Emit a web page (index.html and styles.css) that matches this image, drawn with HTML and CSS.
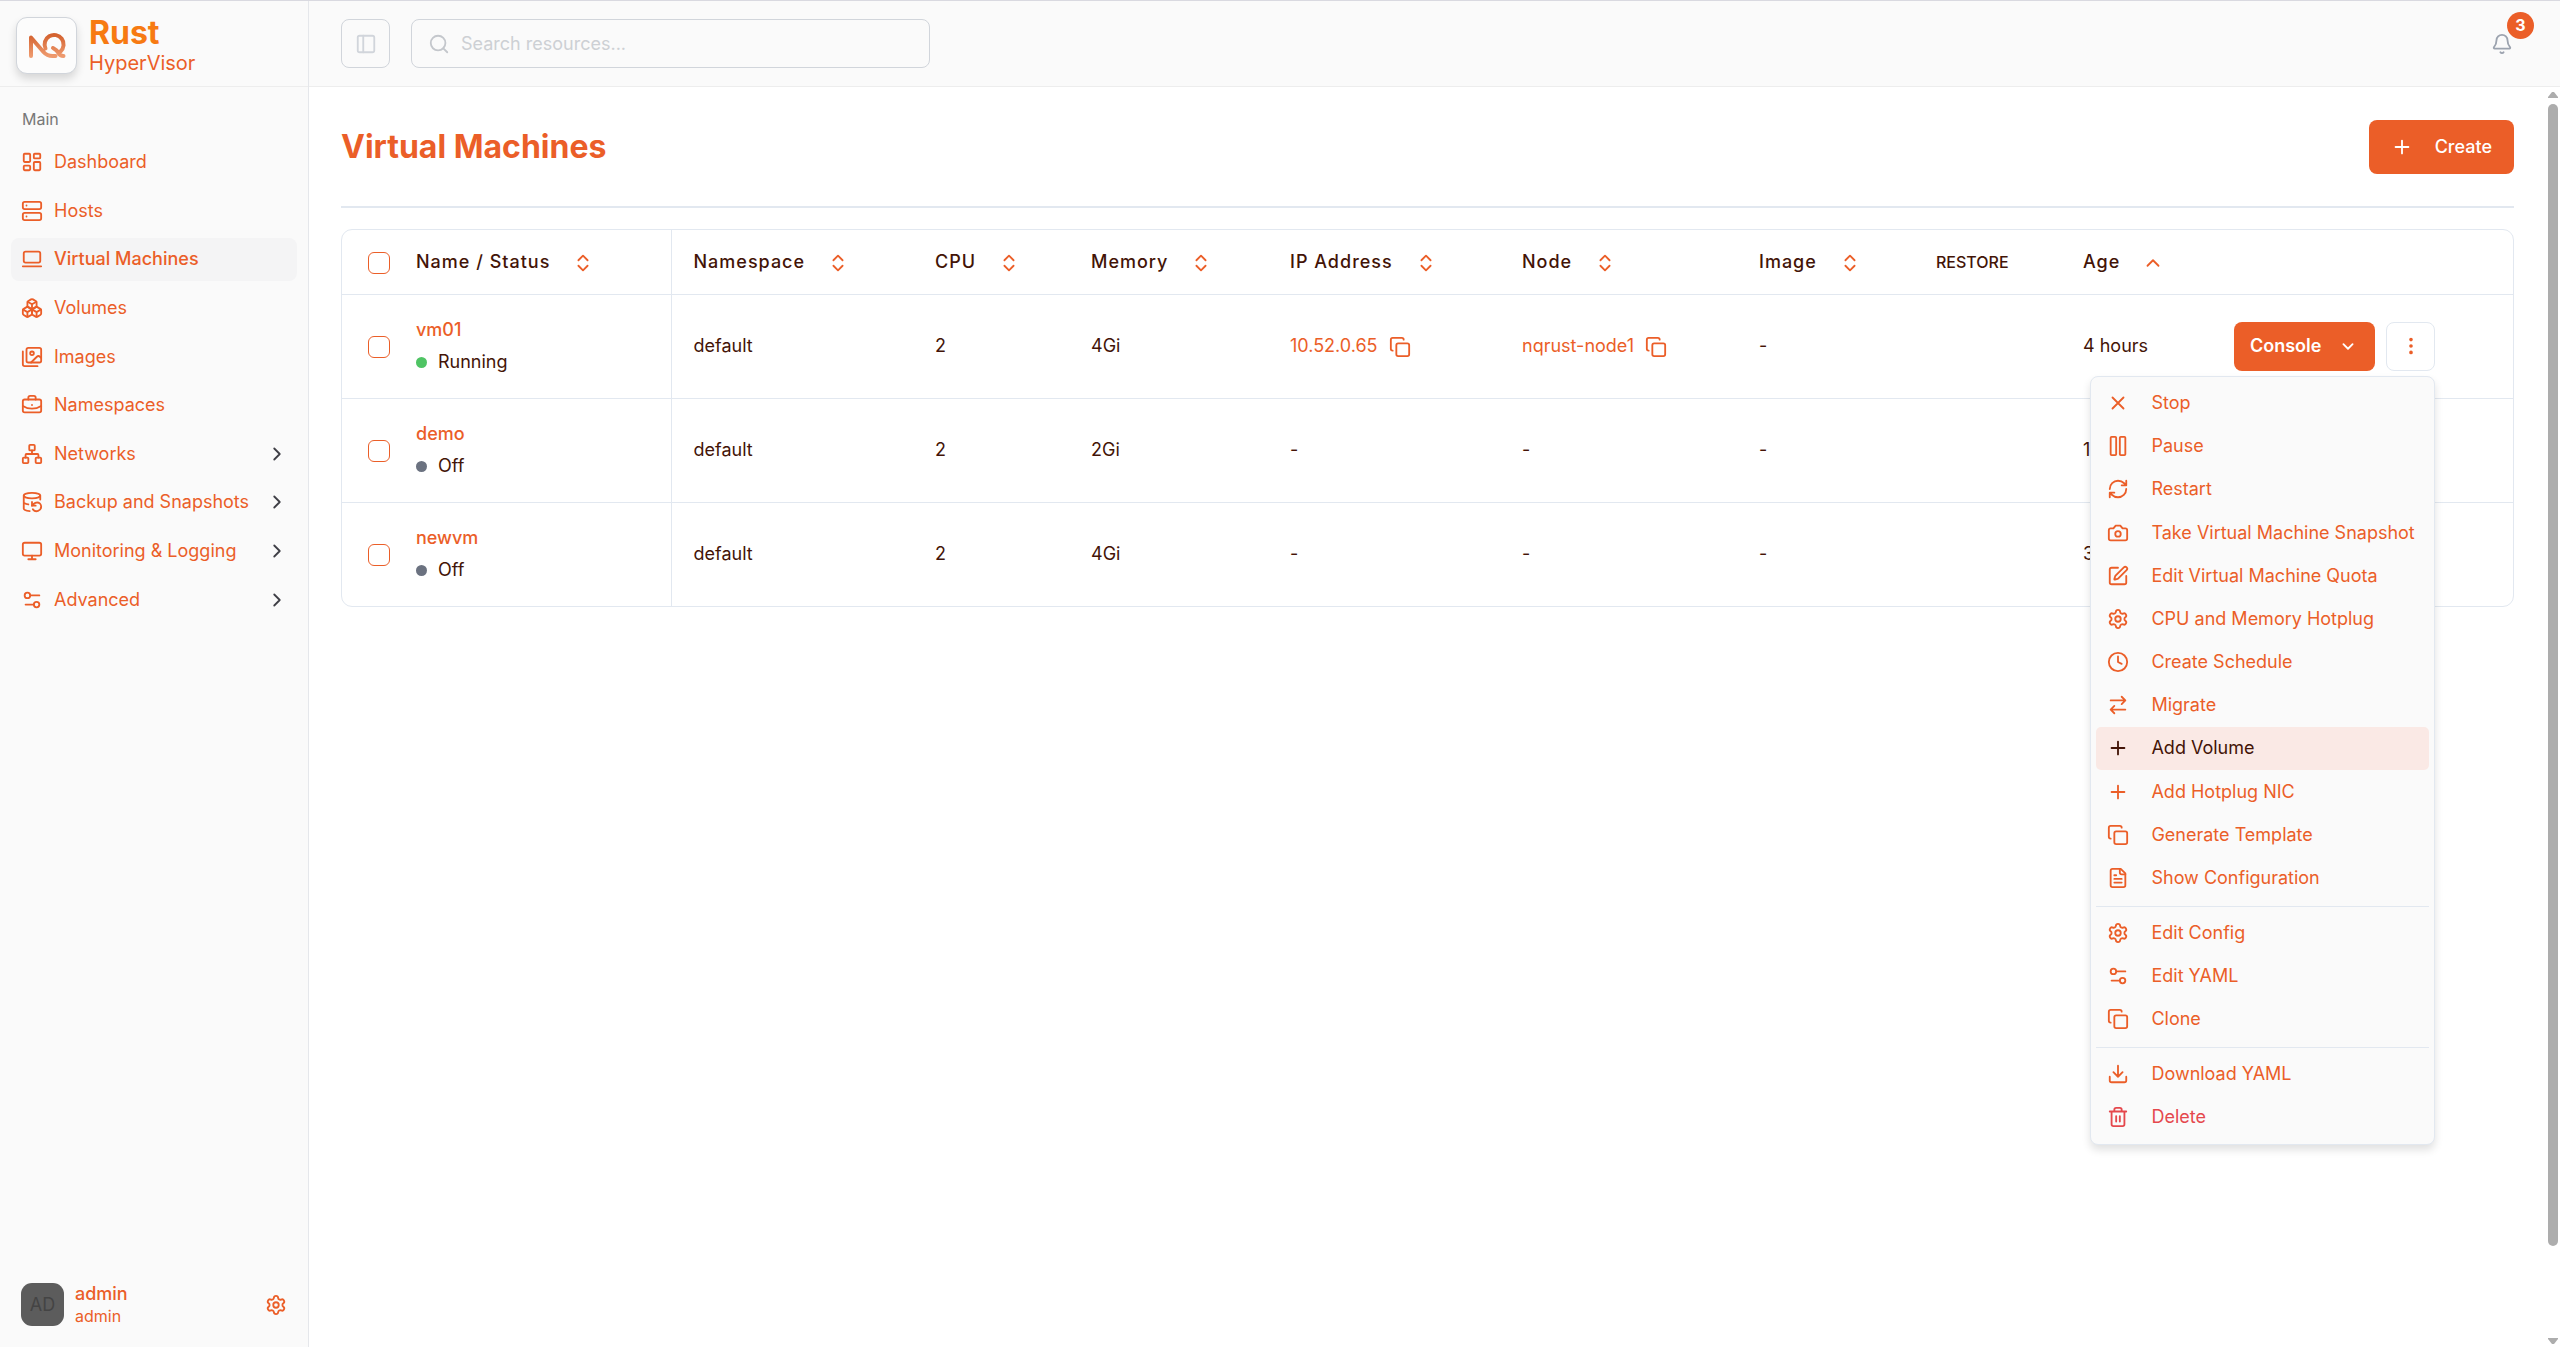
FILE: index.html
```
<!DOCTYPE html>
<html lang="en">
<head>
  <meta charset="UTF-8" />
  <title>Virtual Machines</title>
  <meta name="viewport" content="width=device-width, initial-scale=1" />
  <link rel="stylesheet" href="styles.css">
</head>
<body>

  <!-- icon set -->
  <svg class="sprite" aria-hidden="true">
    <symbol id="i-dashboard" viewBox="0 0 24 24"><rect x="3" y="3" width="7" height="9" rx="1"/><rect x="14" y="3" width="7" height="5" rx="1"/><rect x="14" y="12" width="7" height="9" rx="1"/><rect x="3" y="16" width="7" height="5" rx="1"/></symbol>
    <symbol id="i-server" viewBox="0 0 24 24"><rect x="2" y="2" width="20" height="8" rx="2"/><rect x="2" y="14" width="20" height="8" rx="2"/><path d="M6 6h.01M6 18h.01"/></symbol>
    <symbol id="i-laptop" viewBox="0 0 24 24"><rect x="3" y="4" width="18" height="12" rx="2"/><path d="M2 20h20"/></symbol>
    <symbol id="i-boxes" viewBox="0 0 24 24"><path d="M2.97 12.92A2 2 0 0 0 2 14.63v3.24a2 2 0 0 0 .97 1.71l3 1.8a2 2 0 0 0 2.06 0L12 19v-5.5l-5-3-4.03 2.42Z"/><path d="m7 16.5-4.74-2.85M7 16.5l5-3M7 16.5v5.17"/><path d="M12 13.5V19l3.97 2.38a2 2 0 0 0 2.06 0l3-1.8a2 2 0 0 0 .97-1.71v-3.24a2 2 0 0 0-.97-1.71L17 10.5l-5 3Z"/><path d="m17 16.5-5-3M17 16.5l4.74-2.85M17 16.5v5.17"/><path d="M7.97 4.42A2 2 0 0 0 7 6.13v4.37l5 3 5-3V6.13a2 2 0 0 0-.97-1.71l-3-1.8a2 2 0 0 0-2.06 0l-3 1.8Z"/><path d="M12 8 7.26 5.15M12 8l4.74-2.85M12 13.5V8"/></symbol>
    <symbol id="i-images" viewBox="0 0 24 24"><path d="M18 22H4a2 2 0 0 1-2-2V6"/><path d="m22 13-1.296-1.296a2.41 2.41 0 0 0-3.408 0L11 18"/><circle cx="12" cy="8" r="2"/><rect x="6" y="2" width="16" height="16" rx="2"/></symbol>
    <symbol id="i-briefcase" viewBox="0 0 24 24"><path d="M12 12h.01M16 6V4a2 2 0 0 0-2-2h-4a2 2 0 0 0-2 2v2M22 13a18.15 18.15 0 0 1-20 0"/><rect x="2" y="6" width="20" height="14" rx="2"/></symbol>
    <symbol id="i-network" viewBox="0 0 24 24"><rect x="16" y="16" width="6" height="6" rx="1"/><rect x="2" y="16" width="6" height="6" rx="1"/><rect x="9" y="2" width="6" height="6" rx="1"/><path d="M5 16v-3a1 1 0 0 1 1-1h12a1 1 0 0 1 1 1v3M12 12V8"/></symbol>
    <symbol id="i-backup" viewBox="0 0 24 24"><ellipse cx="12" cy="5" rx="9" ry="3"/><path d="M3 12a9 3 0 0 0 5 2.69M21 9.3V5M3 5v14a9 3 0 0 0 6.47 2.88M12 12v4h4"/><path d="M13 20a5 5 0 0 0 9-3 4.5 4.5 0 0 0-4.5-4.5c-1.33 0-2.54.54-3.41 1.41L12 16"/></symbol>
    <symbol id="i-monitor" viewBox="0 0 24 24"><rect x="2" y="3" width="20" height="14" rx="2"/><path d="M8 21h8M12 17v4"/></symbol>
    <symbol id="i-settings2" viewBox="0 0 24 24"><path d="M20 7h-9M14 17H5"/><circle cx="17" cy="17" r="3"/><circle cx="7" cy="7" r="3"/></symbol>
    <symbol id="i-gear" viewBox="0 0 24 24"><path d="M9.671 4.136a2.34 2.34 0 0 1 4.659 0 2.34 2.34 0 0 0 3.319 1.915 2.34 2.34 0 0 1 2.33 4.033 2.34 2.34 0 0 0 0 3.831 2.34 2.34 0 0 1-2.33 4.033 2.34 2.34 0 0 0-3.319 1.915 2.34 2.34 0 0 1-4.659 0 2.34 2.34 0 0 0-3.32-1.915 2.34 2.34 0 0 1-2.33-4.033 2.34 2.34 0 0 0 0-3.831A2.34 2.34 0 0 1 6.35 6.051a2.34 2.34 0 0 0 3.319-1.915"/><circle cx="12" cy="12" r="3"/></symbol>
    <symbol id="i-right" viewBox="0 0 24 24"><path d="m9 18 6-6-6-6"/></symbol>
    <symbol id="i-down" viewBox="0 0 24 24"><path d="m7 10 5 5 5-5"/></symbol>
    <symbol id="i-up" viewBox="0 0 24 24"><path d="m18 15-6-6-6 6"/></symbol>
    <symbol id="i-sort" viewBox="0 0 24 24"><path d="m7 15 5 5 5-5M7 9l5-5 5 5"/></symbol>
    <symbol id="i-panel" viewBox="0 0 24 24"><rect x="3" y="3" width="18" height="18" rx="2"/><path d="M9 3v18"/></symbol>
    <symbol id="i-search" viewBox="0 0 24 24"><circle cx="11" cy="11" r="8"/><path d="m21 21-4.3-4.3"/></symbol>
    <symbol id="i-bell" viewBox="0 0 24 24"><path d="M10.268 21a2 2 0 0 0 3.464 0M3.262 15.326A1 1 0 0 0 4 17h16a1 1 0 0 0 .74-1.673C19.41 13.956 18 12.499 18 8A6 6 0 0 0 6 8c0 4.499-1.411 5.956-2.738 7.326"/></symbol>
    <symbol id="i-plus" viewBox="0 0 24 24"><path d="M5 12h14M12 5v14"/></symbol>
    <symbol id="i-copy" viewBox="0 0 24 24"><rect x="8" y="8" width="14" height="14" rx="2"/><path d="M4 16c-1.1 0-2-.9-2-2V4c0-1.1.9-2 2-2h10c1.1 0 2 .9 2 2"/></symbol>
    <symbol id="i-dots" viewBox="0 0 24 24"><circle cx="12" cy="12" r="1"/><circle cx="12" cy="5" r="1"/><circle cx="12" cy="19" r="1"/></symbol>
    <symbol id="i-x" viewBox="0 0 24 24"><path d="M18 6 6 18M6 6l12 12"/></symbol>
    <symbol id="i-pause" viewBox="0 0 24 24"><rect x="14" y="2" width="6" height="20" rx="1"/><rect x="4" y="2" width="6" height="20" rx="1"/></symbol>
    <symbol id="i-refresh" viewBox="0 0 24 24"><path d="M3 12a9 9 0 0 1 9-9 9.75 9.75 0 0 1 6.74 2.74L21 8M21 3v5h-5M21 12a9 9 0 0 1-9 9 9.75 9.75 0 0 1-6.74-2.74L3 16M8 16H3v5"/></symbol>
    <symbol id="i-camera" viewBox="0 0 24 24"><path d="M14.5 4h-5L7 7H4a2 2 0 0 0-2 2v9a2 2 0 0 0 2 2h16a2 2 0 0 0 2-2V9a2 2 0 0 0-2-2h-3l-2.5-3z"/><circle cx="12" cy="13" r="3"/></symbol>
    <symbol id="i-edit" viewBox="0 0 24 24"><path d="M12 3H5a2 2 0 0 0-2 2v14a2 2 0 0 0 2 2h14a2 2 0 0 0 2-2v-7"/><path d="M18.375 2.625a1 1 0 0 1 3 3l-9.013 9.014a2 2 0 0 1-.853.505l-2.873.84a.5.5 0 0 1-.62-.62l.84-2.873a2 2 0 0 1 .506-.852z"/></symbol>
    <symbol id="i-clock" viewBox="0 0 24 24"><circle cx="12" cy="12" r="10"/><path d="M12 6v6l4 2"/></symbol>
    <symbol id="i-migrate" viewBox="0 0 24 24"><path d="m16 3 4 4-4 4M20 7H4M8 21l-4-4 4-4M4 17h16"/></symbol>
    <symbol id="i-file" viewBox="0 0 24 24"><path d="M15 2H6a2 2 0 0 0-2 2v16a2 2 0 0 0 2 2h12a2 2 0 0 0 2-2V7Z"/><path d="M14 2v4a2 2 0 0 0 2 2h4M10 9H8M16 13H8M16 17H8"/></symbol>
    <symbol id="i-download" viewBox="0 0 24 24"><path d="M21 15v4a2 2 0 0 1-2 2H5a2 2 0 0 1-2-2v-4M7 10l5 5 5-5M12 15V3"/></symbol>
    <symbol id="i-trash" viewBox="0 0 24 24"><path d="M3 6h18M19 6v14c0 1-1 2-2 2H7c-1 0-2-1-2-2V6M8 6V4c0-1 1-2 2-2h4c1 0 2 1 2 2v2M10 11v6M14 11v6"/></symbol>
  </svg>

  <div class="layout">
    <aside class="sidebar">
      <div class="brand">
        <div class="logo">
          <svg viewBox="0 0 40 32" aria-hidden="true">
            <defs>
              <linearGradient id="nq" x1="0" y1="0" x2="0" y2="1">
                <stop offset="0" stop-color="#d4622f"/>
                <stop offset="1" stop-color="#ee9a6e"/>
              </linearGradient>
            </defs>
            <path class="logo-mark" d="M4 26V7.5L16.500 22q3.500 4 9 4h3M18.500 18.500a9.500 9.500 0 1 1 15 3M26 18q4 2 5.500 5t5 3"/>
          </svg>
        </div>
        <div>
          <div class="brand-name">Rust</div>
          <div class="brand-sub">HyperVisor</div>
        </div>
      </div>

      <nav class="nav">
        <div class="nav-title">Main</div>
        <div class="nav-list">
          <a href="#"><svg class="icon"><use href="#i-dashboard"/></svg>Dashboard</a>
          <a href="#"><svg class="icon"><use href="#i-server"/></svg>Hosts</a>
          <a href="#" class="active"><svg class="icon"><use href="#i-laptop"/></svg>Virtual Machines</a>
          <a href="#"><svg class="icon"><use href="#i-boxes"/></svg>Volumes</a>
          <a href="#"><svg class="icon"><use href="#i-images"/></svg>Images</a>
          <a href="#"><svg class="icon"><use href="#i-briefcase"/></svg>Namespaces</a>
          <a href="#"><svg class="icon"><use href="#i-network"/></svg>Networks<svg class="icon arrow"><use href="#i-right"/></svg></a>
          <a href="#"><svg class="icon"><use href="#i-backup"/></svg>Backup and Snapshots<svg class="icon arrow"><use href="#i-right"/></svg></a>
          <a href="#"><svg class="icon"><use href="#i-monitor"/></svg>Monitoring &amp; Logging<svg class="icon arrow"><use href="#i-right"/></svg></a>
          <a href="#"><svg class="icon"><use href="#i-settings2"/></svg>Advanced<svg class="icon arrow"><use href="#i-right"/></svg></a>
        </div>
      </nav>

      <div class="user">
        <div class="avatar">AD</div>
        <div>
          <div class="user-name">admin</div>
          <div class="user-role">admin</div>
        </div>
        <button class="user-settings" aria-label="Settings"><svg class="icon"><use href="#i-gear"/></svg></button>
      </div>
    </aside>

    <div class="content">
      <header class="topbar">
        <button class="toggle" aria-label="Toggle sidebar"><svg class="icon"><use href="#i-panel"/></svg></button>
        <label class="search">
          <svg class="icon"><use href="#i-search"/></svg>
          <input type="text" placeholder="Search resources..." aria-label="Search resources" />
        </label>
        <button class="bell" aria-label="Notifications">
          <svg class="icon"><use href="#i-bell"/></svg>
          <span class="badge">3</span>
        </button>
      </header>

      <div class="page">
        <main>
          <div class="page-head">
            <h1>Virtual Machines</h1>
            <button class="create"><svg class="icon"><use href="#i-plus"/></svg>Create</button>
          </div>

          <div class="table-box">
            <table>
              <colgroup>
                <col class="c-check"><col class="c-name"><col class="c-ns"><col class="c-cpu"><col class="c-mem"><col class="c-ip"><col class="c-node"><col class="c-image"><col class="c-restore"><col class="c-age"><col class="c-actions">
              </colgroup>
              <thead>
                <tr>
                  <th class="check"><input type="checkbox" aria-label="Select all" /></th>
                  <th class="name">Name / Status<svg class="icon sort"><use href="#i-sort"/></svg></th>
                  <th>Namespace<svg class="icon sort"><use href="#i-sort"/></svg></th>
                  <th>CPU<svg class="icon sort"><use href="#i-sort"/></svg></th>
                  <th>Memory<svg class="icon sort"><use href="#i-sort"/></svg></th>
                  <th>IP Address<svg class="icon sort"><use href="#i-sort"/></svg></th>
                  <th>Node<svg class="icon sort"><use href="#i-sort"/></svg></th>
                  <th>Image<svg class="icon sort"><use href="#i-sort"/></svg></th>
                  <th class="restore">RESTORE</th>
                  <th>Age<svg class="icon sort"><use href="#i-up"/></svg></th>
                  <th></th>
                </tr>
              </thead>
              <tbody>
                <tr>
                  <td class="check"><input type="checkbox" aria-label="Select vm01" /></td>
                  <td class="name"><a href="#">vm01</a><div class="status running">Running</div></td>
                  <td>default</td>
                  <td>2</td>
                  <td>4Gi</td>
                  <td><a href="#">10.52.0.65<svg class="icon copy"><use href="#i-copy"/></svg></a></td>
                  <td><a href="#">nqrust-node1<svg class="icon copy"><use href="#i-copy"/></svg></a></td>
                  <td>-</td>
                  <td></td>
                  <td>4 hours</td>
                  <td>
                    <div class="actions">
                      <button class="console">Console<svg class="icon"><use href="#i-down"/></svg></button>
                      <button class="more" aria-label="More"><svg class="icon"><use href="#i-dots"/></svg></button>
                      <div class="menu">
                        <div class="menu-group main-group">
                          <button><svg class="icon"><use href="#i-x"/></svg>Stop</button>
                          <button><svg class="icon"><use href="#i-pause"/></svg>Pause</button>
                          <button><svg class="icon"><use href="#i-refresh"/></svg>Restart</button>
                          <button><svg class="icon"><use href="#i-camera"/></svg>Take Virtual Machine Snapshot</button>
                          <button><svg class="icon"><use href="#i-edit"/></svg>Edit Virtual Machine Quota</button>
                          <button><svg class="icon"><use href="#i-gear"/></svg>CPU and Memory Hotplug</button>
                          <button><svg class="icon"><use href="#i-clock"/></svg>Create Schedule</button>
                          <button><svg class="icon"><use href="#i-migrate"/></svg>Migrate</button>
                          <button class="hover"><svg class="icon"><use href="#i-plus"/></svg>Add Volume</button>
                          <button><svg class="icon"><use href="#i-plus"/></svg>Add Hotplug NIC</button>
                          <button><svg class="icon"><use href="#i-copy"/></svg>Generate Template</button>
                          <button><svg class="icon"><use href="#i-file"/></svg>Show Configuration</button>
                        </div>
                        <div class="menu-group">
                          <button><svg class="icon"><use href="#i-gear"/></svg>Edit Config</button>
                          <button><svg class="icon"><use href="#i-settings2"/></svg>Edit YAML</button>
                          <button><svg class="icon"><use href="#i-copy"/></svg>Clone</button>
                        </div>
                        <div class="menu-group">
                          <button><svg class="icon"><use href="#i-download"/></svg>Download YAML</button>
                          <button class="danger"><svg class="icon"><use href="#i-trash"/></svg>Delete</button>
                        </div>
                      </div>
                    </div>
                  </td>
                </tr>
                <tr>
                  <td class="check"><input type="checkbox" aria-label="Select demo" /></td>
                  <td class="name"><a href="#">demo</a><div class="status">Off</div></td>
                  <td>default</td>
                  <td>2</td>
                  <td>2Gi</td>
                  <td>-</td>
                  <td>-</td>
                  <td>-</td>
                  <td></td>
                  <td>1</td>
                  <td></td>
                </tr>
                <tr>
                  <td class="check"><input type="checkbox" aria-label="Select newvm" /></td>
                  <td class="name"><a href="#">newvm</a><div class="status">Off</div></td>
                  <td>default</td>
                  <td>2</td>
                  <td>4Gi</td>
                  <td>-</td>
                  <td>-</td>
                  <td>-</td>
                  <td></td>
                  <td>3</td>
                  <td></td>
                </tr>
              </tbody>
            </table>
          </div>
        </main>

        <div class="scrollbar" aria-hidden="true">
          <svg viewBox="0 0 10 8"><path d="M4 1h2l4 5v1H0V6z"/></svg>
          <div class="track"><div class="thumb"></div></div>
          <svg viewBox="0 0 10 8"><path d="M4 7h2l4-5V1H0v1z"/></svg>
        </div>
      </div>
    </div>
  </div>

</body>
</html>
```

FILE: styles.css
```
* {
  box-sizing: border-box;
}

body {
  margin: 0;
  background: #ffffff;
  color: #431407;
  font-family: Inter, "Liberation Sans", sans-serif;
  font-size: 18px;
  line-height: 28px;
}

a {
  color: #eb5e28;
  text-decoration: none;
}

button {
  font: inherit;
  color: #eb5e28;
  background: none;
  border: 0;
  padding: 0;
  cursor: pointer;
}

.sprite {
  display: none;
}

.icon {
  width: 22px;
  height: 22px;
  flex: none;
  fill: none;
  stroke: currentColor;
  stroke-width: 2;
  stroke-linecap: round;
  stroke-linejoin: round;
}

.layout {
  display: flex;
  min-height: 100vh;
  border-top: 1px solid #d9d9e0;
}

/* sidebar */
.sidebar {
  width: 309px;
  flex: none;
  display: flex;
  flex-direction: column;
  background: #fafafa;
  border-right: 1px solid #e5e7eb;
}

.brand {
  height: 86px;
  display: flex;
  align-items: center;
  gap: 12px;
  padding: 4px 16px 0;
  border-bottom: 1px solid #ededed;
}

.logo {
  width: 61px;
  height: 57px;
  display: flex;
  align-items: center;
  justify-content: center;
  background: #fcfcfc;
  border: 1px solid #d1d5db;
  border-radius: 11px;
  box-shadow: 0 5px 8px rgba(0, 0, 0, 0.14);
}

.logo svg {
  width: 40px;
  height: 32px;
}

.logo-mark {
  fill: none;
  stroke: url(#nq);
  stroke-width: 4;
  stroke-linecap: round;
  stroke-linejoin: round;
}

.brand-name {
  color: #f77a12;
  font-size: 32px;
  font-weight: 700;
  line-height: 34px;
}

.brand-sub {
  color: #eb5e28;
  font-size: 20px;
  line-height: 26px;
}

.nav {
  flex: 1;
  padding: 11px;
}

.nav-title {
  height: 43px;
  padding: 0 11px;
  color: #777777;
  font-size: 16px;
  line-height: 43px;
}

.nav-list {
  display: grid;
  grid-auto-rows: 1fr;
  gap: 6px;
  height: 480px;
}

.nav-list a {
  display: flex;
  align-items: center;
  gap: 11px;
  padding: 0 9px 0 10px;
  border-radius: 8px;
  white-space: nowrap;
}

.nav-list .active {
  background: #f4f4f5;
  font-weight: 500;
}

.nav-list .arrow {
  margin-left: auto;
  color: #3f3f46;
}

.user {
  display: flex;
  align-items: center;
  gap: 11px;
  padding: 21px 21px 20px;
}

.avatar {
  width: 43px;
  height: 43px;
  border-radius: 11px;
  background: #5c5c5c;
  color: #444444;
  line-height: 43px;
  text-align: center;
}

.user-name {
  color: #eb5e28;
  font-weight: 500;
  line-height: 23px;
}

.user-role {
  color: #eb5e28;
  font-size: 16px;
  line-height: 22px;
}

.user-settings {
  display: flex;
  margin-left: auto;
}

/* top bar */
.content {
  flex: 1;
  min-width: 0;
  display: flex;
  flex-direction: column;
}

.topbar {
  height: 86px;
  display: flex;
  align-items: center;
  gap: 21px;
  padding: 0 47px 0 32px;
  background: #fafafa;
  border-bottom: 1px solid #ededed;
}

.toggle {
  width: 49px;
  height: 49px;
  display: flex;
  align-items: center;
  justify-content: center;
  border: 1px solid #d1d5db;
  border-radius: 8px;
  color: #d1d5db;
}

.search {
  width: 519px;
  height: 49px;
  display: flex;
  align-items: center;
  gap: 11px;
  padding: 0 16px;
  border: 1px solid #d1d5db;
  border-radius: 8px;
  color: #c4c7cc;
}

.search input {
  flex: 1;
  border: 0;
  padding: 0;
  outline: 0;
  background: none;
  font: inherit;
}

.search input::placeholder {
  color: #cdd0d4;
  opacity: 1;
}

.bell {
  position: relative;
  display: flex;
  margin-left: auto;
  color: #9ca3af;
}

.badge {
  position: absolute;
  left: 16px;
  bottom: 16px;
  width: 27px;
  height: 27px;
  border-radius: 50%;
  background: #eb5e28;
  color: #ffffff;
  font-size: 16px;
  font-weight: 700;
  line-height: 27px;
}

/* page */
.page {
  flex: 1;
  display: flex;
}

main {
  flex: 1;
  min-width: 0;
  padding: 33px 34px 32px 32px;
}

.page-head {
  display: flex;
  align-items: center;
  justify-content: space-between;
  padding-bottom: 32px;
  border-bottom: 2px solid #e2e8f0;
}

h1 {
  margin: 0;
  color: #eb5e28;
  font-size: 32px;
  font-weight: 700;
  line-height: 40px;
}

.create {
  height: 54px;
  display: flex;
  align-items: center;
  gap: 22px;
  padding: 0 22px;
  border-radius: 8px;
  background: #eb5e28;
  color: #ffffff;
  font-weight: 500;
}

.table-box {
  margin-top: 21px;
  border: 1px solid #e2e8f0;
  border-radius: 11px;
}

table {
  width: 100%;
  table-layout: fixed;
  border-collapse: collapse;
}

.c-check { width: 52px; }
.c-name { width: 277px; }
.c-ns { width: 242px; }
.c-cpu { width: 156px; }
.c-mem { width: 199px; }
.c-ip { width: 232px; }
.c-node { width: 237px; }
.c-image { width: 177px; }
.c-restore { width: 147px; }
.c-age { width: 151px; }
.c-actions { width: 302px; }

th, td {
  padding: 0 0 0 22px;
  text-align: left;
  white-space: nowrap;
}

th {
  height: 64px;
  font-weight: 500;
  letter-spacing: 1px;
}

td {
  height: 104px;
  border-top: 1px solid #e2e8f0;
}

th .icon, td .icon, input[type="checkbox"] {
  vertical-align: middle;
}

.restore {
  font-size: 16px;
  letter-spacing: 0;
}

.check {
  padding-left: 26px;
}

.name {
  border-right: 1px solid #e2e8f0;
}

.name a {
  font-weight: 500;
}

input[type="checkbox"] {
  appearance: none;
  width: 22px;
  height: 22px;
  margin: 0;
  border: 1px solid #eb5e28;
  border-radius: 6px;
}

.sort {
  margin-left: 22px;
  color: #eb5e28;
}

.copy {
  margin-left: 11px;
}

.status {
  display: flex;
  align-items: center;
  gap: 11px;
  margin-top: 4px;
}

.status::before {
  content: "";
  width: 11px;
  height: 11px;
  border-radius: 50%;
  background: #6b7280;
}

.running::before {
  background: #4fc464;
}

.actions {
  position: relative;
  display: flex;
  gap: 11px;
  width: max-content;
}

.console {
  height: 49px;
  display: flex;
  align-items: center;
  gap: 16px;
  padding: 0 16px;
  border-radius: 8px;
  background: #eb5e28;
  color: #ffffff;
  font-weight: 600;
}

.more {
  width: 49px;
  height: 49px;
  display: flex;
  align-items: center;
  justify-content: center;
  border: 1px solid #e2e8f0;
  border-radius: 8px;
}

/* row menu */
.menu {
  position: absolute;
  top: 54px;
  right: 0;
  z-index: 1;
  min-width: 345px;
  padding: 5px;
  background: #fafafa;
  border: 1px solid #e2e8f0;
  border-radius: 8px;
  box-shadow: 0 5px 8px rgba(0, 0, 0, 0.12);
}

.menu-group {
  display: grid;
  grid-auto-rows: 43px;
}

.main-group {
  grid-auto-rows: 1fr;
  height: 518px;
}

.menu-group + .menu-group {
  margin-top: 6px;
  padding-top: 5px;
  border-top: 1px solid #e2e8f0;
}

.menu button {
  display: flex;
  align-items: center;
  gap: 22px;
  padding: 0 11px;
  border-radius: 5px;
}

.menu .hover {
  background: #fae9e5;
  color: #431407;
}

.menu .danger {
  color: #e5484d;
}

/* scrollbar */
.scrollbar {
  width: 12px;
  display: flex;
  flex-direction: column;
  gap: 5px;
  padding: 4px 2px 2px 0;
}

.scrollbar svg {
  width: 10px;
  height: 8px;
  fill: #adadad;
}

.track {
  flex: 1;
}

.thumb {
  height: 93%;
  border-radius: 5px;
  background: #adadad;
}
```
